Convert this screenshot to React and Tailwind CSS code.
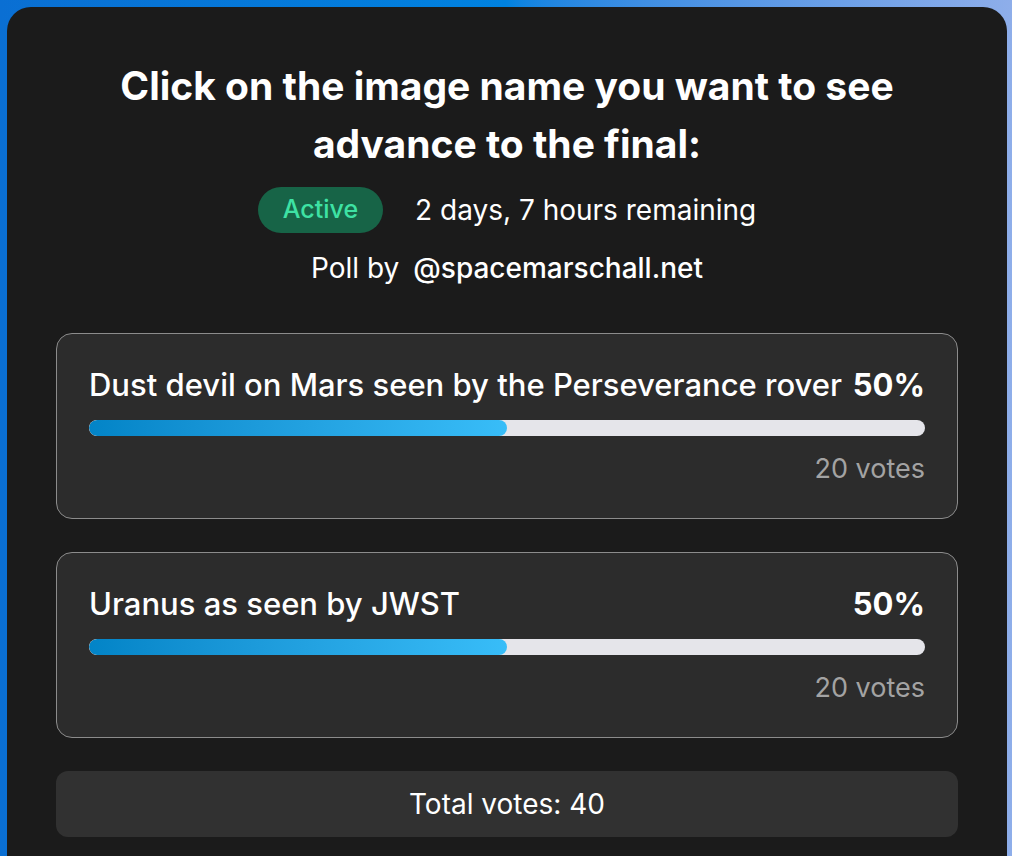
import React from "react";

const options = [
  { name: "Dust devil on Mars seen by the Perseverance rover", pct: 50, votes: 20 },
  { name: "Uranus as seen by JWST", pct: 50, votes: 20 },
];

const PollOption = ({ name, pct, votes }) => {
  return (
    <div className="rounded-[16px] border-[1.5px] border-[#8c8c8c] bg-[#2c2c2c] px-8 pt-[30px] pb-[31px]">
      <div className="flex items-center justify-between gap-[8px] text-[31px] leading-[42px] text-white">
        <span className="whitespace-nowrap font-medium">{name}</span>
        <span className="whitespace-nowrap font-bold">{pct}%</span>
      </div>
      <div className="mt-[14px] h-4 w-full overflow-hidden rounded-full bg-[#e5e5ea]">
        <div
          className="h-full rounded-full bg-linear-to-r from-[#0284c7] to-[#38bdf8]"
          style={{ width: `${pct}%` }}
        />
      </div>
      <div className="mt-[15px] text-right text-[27px] leading-9 text-[#a3a3a3]">{votes} votes</div>
    </div>
  );
};

const App = () => {
  const total = options.reduce((s, o) => s + o.votes, 0);
  return (
    <div className="h-screen overflow-hidden bg-linear-to-r from-[#0a6fd3] via-[#0082e0] to-[#8eaeea] pl-[7px] pr-[5px] pt-[7px] font-['Inter',sans-serif]">
      <div className="rounded-[24px] bg-[#1b1b1b] px-[49px] pt-[50px] pb-12">
        <h1 className="text-center text-[39px] font-bold leading-[58px] text-white">
          Click on the image name you want to see
          <br />
          advance to the final:
        </h1>
        <div className="mt-[14px] flex items-center justify-center gap-8">
          <span className="flex h-[46px] items-center rounded-full bg-[#176447] px-[25px] text-[25px] font-medium text-[#3ee2a4]">
            Active
          </span>
          <span className="text-[28px] text-white">2 days, 7 hours remaining</span>
        </div>
        <div className="mt-[17px] flex justify-center gap-[14px] text-[28px] leading-9 text-white">
          <span>Poll by</span>
          <span className="font-medium">@spacemarschall.net</span>
        </div>

        <div className="mt-[47px] flex flex-col gap-[33px]">
          {options.map((o) => (
            <PollOption key={o.name} {...o} />
          ))}
        </div>

        <div className="mt-[33px] rounded-[12px] bg-[#313131] py-[15px] text-center text-[28px] leading-9 text-white">
          Total votes: {total}
        </div>
      </div>
    </div>
  );
};

export default App;
